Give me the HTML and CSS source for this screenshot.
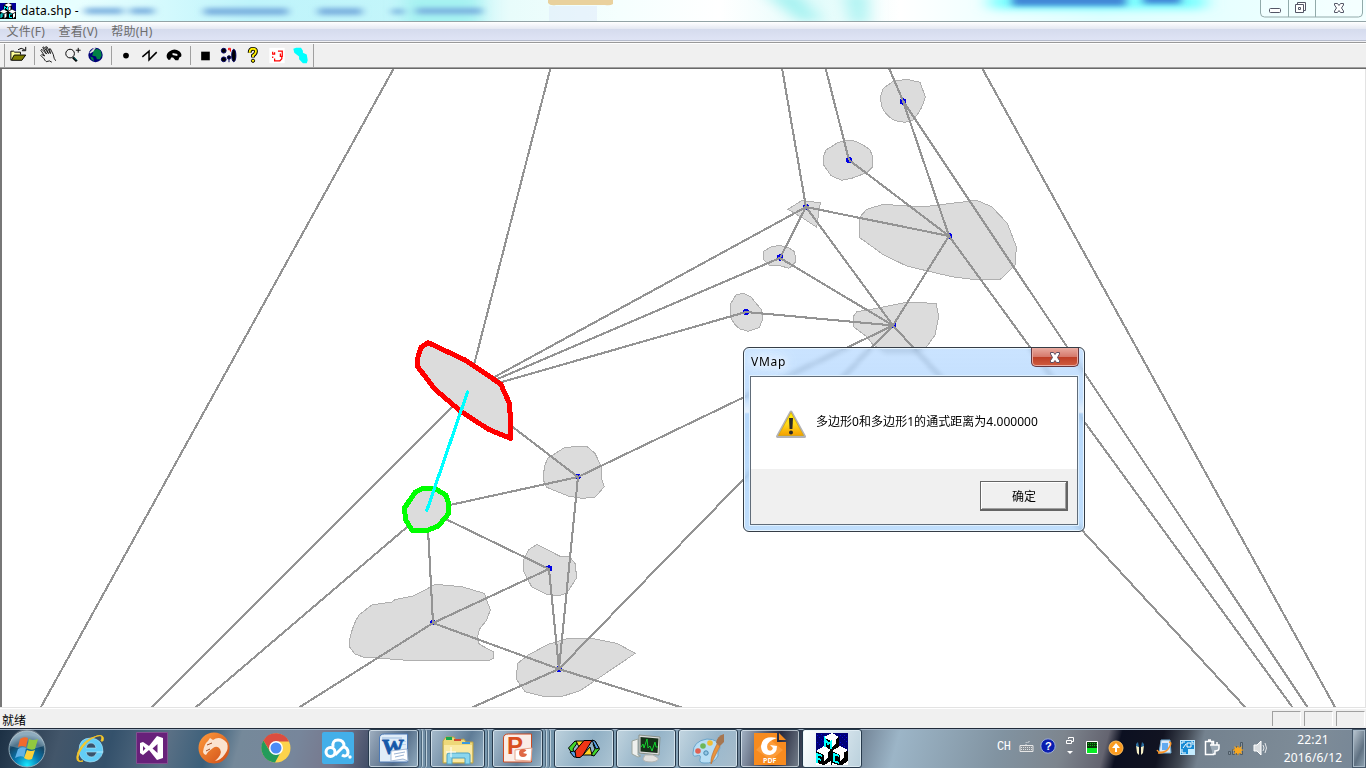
FILE: index.html
```html
<!DOCTYPE html>
<html lang="zh-CN">
<head>
<meta charset="utf-8">
<title>data.shp</title>
<link rel="stylesheet" href="styles.css">
</head>
<body>
<div class="window">
  <header class="titlebar">
    <svg class="app-icon" width="16" height="16" viewBox="0 0 32 32"><path fill="#000" d="M0 0h32v32H0z"/><path fill="#000096" d="M0 0h12L7 5v8L0 16zM21 0h11v16l-8-4V5z"/><path fill="#fff" d="M9 4l8-4 7 4-7 4zM0 17l7-4 8 4-7 4zM17 17l7-4 8 4-7 4zM17 9l4-2v6l-4 3zM9 22l4-2v7l-4 4zM26 22l4-2v7l-4 4z"/><path fill="none" stroke="#0ff" stroke-width="2" d="M9 13V7l6 6V7M2 30v-8h5M2 26h4M24 22h-5v7h5"/></svg>
    <span class="title">data.shp -</span>
    <svg class="glass-blur" width="1366" height="21" viewBox="0 0 1366 21">
      <defs><filter id="soft" x="-10%" y="-150%" width="120%" height="400%"><feGaussianBlur stdDeviation="4 2.5"/></filter><filter id="haze" x="-10%" y="-100%" width="120%" height="300%"><feGaussianBlur stdDeviation="9 4"/></filter></defs>
      <g filter="url(#haze)"><path fill="#a5f2f1" d="M405-6h75v32h-75zM765-6h35l20 27h-20zM845-6h22v30h-15z"/><path fill="#7ff" d="M990-6h215v15h-215z"/></g>
      <g filter="url(#soft)"><path fill="#3f86d6" d="M1012-8h114v14h-114zM1143-8h38v12h-38z"/><path fill="#78aede" d="M85 8h38v6H85zM130 8h24v6h-24zM204 8h84v7h-84zM318 8h44v7h-44zM392 9h12v5h-12zM416 8h66v6h-66z"/></g>
      <path fill="#e8c98c" opacity=".85" d="M548 0h65v4q-3 2-8 1h-49q-6 1-8-2z"/><path fill="#dae4fb" opacity=".4" d="M549 6h48v15h-48z"/>
    </svg>
    <div class="controls">
      <svg width="103" height="18" viewBox="0 0 103 18"><path d="M.5 0v13q0 4 4 4h94q4 0 4-4V0M28.500 0v17M55.500 0v17" fill="none" stroke="#91aaaa"/><g fill="#fff" stroke="#535666"><rect x="9.500" y="8.500" width="11" height="4" rx="1"/><path d="M37.500 2.500h8v8h-8z"/><path d="M35.500 4.500h8v8h-8z"/><path d="M38.500 7.500h2v2h-2z"/><path d="M74.500 3.500h3l1.500 2 1.500-2h3v1.500L81.500 8l2 3v1.500h-3l-1.500-2-1.500 2h-3V11l2-3-2-3z"/></g></svg>
    </div>
  </header>
  <nav class="menubar"><span>文件(F)</span><span>查看(V)</span><span>帮助(H)</span></nav>
  <div class="toolbar">
    <i class="grip"></i>
    <svg viewBox="0 0 24 24"><path d="M3.500 17V7.500h3l1 1h6V11" fill="#ff9" stroke="#000"/><path d="M4 17l3-5.500h12L15 17z" fill="#808000" stroke="#000"/><path d="M11 6q3-3 7 0M19 3v4h-4" fill="none" stroke="#000"/></svg>
    <i class="sep"></i>
    <svg viewBox="0 0 24 24"><path d="M9.500 18l-2-3-3-3 1-1 3 1.500-4-6 1-1 5 5-4-7 1-.5 5 7-3-7h1.500l3.500 7-1-5h1l3 6 1 4 1.500 2.500M10 18.500q4-2 6 .5" fill="none" stroke="#000" stroke-width=".9"/></svg>
    <svg viewBox="0 0 24 24"><circle cx="10" cy="10" r="4.500" fill="none" stroke="#000"/><path d="M13 14l4 4" stroke="#000" stroke-width="2.500"/><path d="M14 14l3 3" stroke="#0a9090"/><path d="M16 6.500h5M18.500 4v5" stroke="#000"/></svg>
    <svg viewBox="0 0 24 24"><circle cx="11.500" cy="11.500" r="7.500" fill="#000078"/><path d="M9 7l4-2 4 2 1 5-2 4h-3l-1-3-4-1 1-3zM6 13l3 1 1 4-3-2z" fill="#008244"/><path d="M5 9l5-5h2l-3 4-3 2z" fill="#ddd"/></svg>
    <i class="sep second"></i>
    <svg viewBox="0 0 24 24"><circle cx="12" cy="12" r="3"/></svg>
    <svg viewBox="0 0 24 24"><path d="M4 13.500l7-6v9l8-8" fill="none" stroke="#000" stroke-width="1.600"/></svg>
    <svg viewBox="0 0 24 24"><path fill-rule="evenodd" d="M4.500 14q-1-4 3-6.500 5-3.500 10 0 3 2.500 2 5.500l-2 1-1 3h-3l-2.500-3H9l-1 2.500H6zM10.500 9.500v2l5 1v-2z"/></svg>
    <i class="sep third"></i>
    <svg viewBox="0 0 24 24"><path d="M8 8h9v9H8z"/></svg>
    <svg viewBox="0 0 24 24"><g fill="#000" stroke="#000060"><circle cx="6.500" cy="7" r="2.500"/><circle cx="6.500" cy="16" r="2.500"/><circle cx="12" cy="14" r="1.800"/><path d="M12 15v4"/><ellipse cx="17" cy="12" rx="2.200" ry="6.500"/></g><path d="M13.500 8V4.500h-2V6h2" fill="none" stroke="red"/></svg>
    <svg viewBox="0 0 24 24"><path d="M8.500 9q0-4 3.500-4t3 3q0 2-3 4v2" fill="none" stroke="#000" stroke-width="4"/><path d="M8.500 9q0-4 3.500-4t3 3q0 2-3 4v1.500" fill="none" stroke="#ffef00" stroke-width="2"/><circle cx="12" cy="17.500" r="1.700" fill="#ffef00" stroke="#000"/></svg>
    <svg viewBox="0 0 24 24"><path fill="#fff" d="M4 4h16v16H4z"/><path d="M7.500 8v2.500h2V8.500M13 7.500h4.500V13h-2v-3M7.500 13v1.500M9.500 15v2.500h5.500l2-2v-2" fill="none" stroke="red" stroke-width="1.300"/></svg>
    <svg viewBox="0 0 24 24"><path d="M4 5l3-1h5l2 3v2l4 2 1 6-1 3h-4l-4-4v-3l-5-4z" fill="#0ff"/></svg>
    <i class="sep last"></i>
  </div>
  <main class="map">
    <svg width="1364" height="638" viewBox="2 69 1364 638" shape-rendering="crispEdges">
      <g fill="#dcdcdc" stroke="#afafaf">
        <path d="M893.3 81.300L906.700 79.300 920 82.300 925.300 96.700Q923 108 913.300 120L905 122.300 895 120.700Q886 116 881.700 106.700L880.300 96.700 883.300 88.300z"/>
        <path d="M826 150L838.300 142.300Q846 140 853.300 140.700 863 144 870 150L872.700 156.700V166.700L866.700 172.700 851.700 178.300 841.700 180.300 831 175.700 823.700 165V156z"/>
        <path d="M787.7 209.300L801.700 200.700 820.300 202.700 816.700 227.300 803.300 218.300z"/>
        <path d="M859.3 217.700L866.700 209.300 883.300 204.300 921.700 207 976.700 200.300 991.700 206.700 1007.300 223.300 1016.300 246.700 1015.300 265 1000.700 279 978.300 280 951.700 276.700 906.700 266 883.300 254.700 859.300 237.300z"/>
        <path d="M763.3 251.700L770 247.300 779.300 245.300 787.700 247.300 794.700 251.700 795.700 261.700 789 268.300 780 265.700 770 266 763.300 259.300z"/>
        <path d="M743.3 293.300L750.700 296.700 761.700 310 762.300 320 759.300 327.700 748.300 331.300 740 329Q733 324 730.700 316.700L731 303.300 736 295z"/>
        <path d="M856.7 311.700L873.300 309 906.700 302.300 936 303.300 938.700 316.700 935 335 926.700 346.700 915 352H885L873.300 345 866.700 336.700 853.300 326.700V316.700z"/>
        <path d="M547.7 458.300L565 447.300 586.700 446.300 595 453.300 601 466 602 480 604.300 486.700 595 497.300 581.700 498.300 568.300 496 546.700 487.300 543.300 480 544.300 466.700z"/>
        <path d="M537 544.300L560 556.300H569.300L575.700 564.300 576.300 578.300 566.700 593.300 558.300 595.700 546.700 594.300 531.700 586.700 523.700 571.700V560L528.300 550z"/>
        <path d="M435 584.300L461.700 586.700 484.300 593.300 490.300 610 486.700 620 479.300 629.300 477.300 638.300 479.300 644.300 493.300 651.700V658.300L489 660.300H406.700L363.300 657 355 654 349.300 646.700 350 638.300Q353 624 359 615L371.700 605 391.700 602 395 599.700 413.300 596 423.300 591z"/>
        <path d="M516.7 673.300L517.700 663.300 528.300 655 548.300 644.300 568.300 638.300H591.700L616.700 643.300 635.300 653.300 580 690.700 563.300 696H541.700L525 691.700 517 680z"/>
      </g>
      <g fill="#0000e6">
        <circle cx="903" cy="101.500" r="3.200"/><circle cx="849" cy="160" r="3.200"/><circle cx="806" cy="207" r="3.200"/><circle cx="949.500" cy="236" r="3"/><circle cx="780" cy="257.500" r="3.200"/><circle cx="746" cy="312" r="3.200"/><circle cx="893.500" cy="325.500" r="3"/><circle cx="578" cy="476.500" r="3"/><circle cx="549" cy="568.500" r="3.200"/><circle cx="433" cy="622.500" r="3"/><circle cx="559" cy="669" r="3"/>
      </g>
      <path fill="none" stroke="#949494" stroke-width="2.100" d="M394 68L41 707M550.500 68L467 392M782 68L806 207M825.500 68L849 160M889 68L903 101L949 236L849 160M903 101L1308 708M982 68L1335.500 708M949 236L1293 708M949 236L806 207L893 325.500L1246 708M806 207L780 258L893 325.500L746 312L467 392L780 258M467 392L806 207M949 236L893 325.500L578 477L467 392L151 708M893 325.500L559 669M427 510L578 477L559 669L549 569L427 510L195 708M427 510L433 623L549 569M433 623L559 669L682 707.500M433 623L299 707.500M559 669L472 707.500"/>
      <path fill="#dcdcdc" stroke="red" stroke-width="5" stroke-linejoin="round" d="M428.3 342.700L465 360 500.700 384 509.700 404 511 438.500 488.300 429.300 460 410.700 435 389.300 417.700 366.700V358L421 347.300z"/>
      <path fill="#dcdcdc" stroke="#0f0" stroke-width="5" stroke-linejoin="round" d="M422.3 488.500H435L446 495.300 449 504 448.300 514 438.300 526 426.700 530.700H412.300L405.700 520 404.300 508.300 415 492.300z"/>
      <path d="M467.500 392L427 510" stroke="#0ff" stroke-width="3.200" stroke-linecap="round"/>
    </svg>
  </main>
  <footer class="status"><span class="ready">就绪</span><i></i><i></i><i></i></footer>
</div>

<section class="dialog">
  <div class="dialog-head"><span>VMap</span>
    <div class="close"><svg width="12" height="11" viewBox="0 0 12 11"><path d="M1.500.500h3L6 2.500 7.500.500h3V2L8.500 5.500l2 3V10.500h-3L6 8.500l-1.500 2h-3V8.500l2-3L1.500 2z" fill="#fff" stroke="#5e4c60"/></svg></div>
  </div>
  <div class="dialog-body">
    <div class="message">
      <svg width="32" height="30" viewBox="0 0 32 30"><defs><linearGradient id="warn" x2="0" y2="1"><stop stop-color="#fff200"/><stop offset=".5" stop-color="#ffd91c"/><stop offset="1" stop-color="#f5a000"/></linearGradient></defs><path d="M16 3L2.500 27.500h27z" fill="#bbb" stroke="#b3b3b7" stroke-width="3" stroke-linejoin="round"/><path d="M16 3.500L3.500 26.500h25z" fill="url(#warn)" stroke="#d8a500" stroke-width=".7"/><path d="M14 9h4l-.6 11h-2.800z" fill="#292929"/><circle cx="16" cy="23.500" r="2" fill="#292929"/></svg>
      <span>多边形0和多边形1的通式距离为4.000000</span>
    </div>
    <div class="actions"><button>确定</button></div>
  </div>
</section>

<div class="taskbar">
  <div class="start"><svg width="40" height="40" viewBox="0 0 40 40"><defs><radialGradient id="orb" cx=".5" cy=".95" r=".85"><stop stop-color="#18e9ff"/><stop offset=".4" stop-color="#087ab2"/><stop offset=".75" stop-color="#154564"/><stop offset="1" stop-color="#6a91a9"/></radialGradient></defs><circle cx="20" cy="20" r="18" fill="url(#orb)" stroke="#94acb9"/><path d="M3 17a17 17 0 0 1 34 0q-17 6-34 0z" fill="#fff" opacity=".25"/><path d="M13 10q4-3 8-1l-2 9q-4-2-8 0z" fill="#f06a2d"/><path d="M22 10q4 2 9 0l-3 10q-4 2-8-1z" fill="#91c83e"/><path d="M11 20q4-3 8-1l-2 9q-4-2-9 1z" fill="#5fb2e7"/><path d="M20 21q4 2 8 0l-3 9q-4 2-8-1z" fill="#fbd13b"/></svg></div>
  <div class="pin"><svg viewBox="0 0 32 32"><path d="M23 20h6q-3 10-13 10-11-1-11-12Q5 6 17 6q12 1 12 14H12q1 5 6 5 3 0 5-5zm-11-4h10q-1-5-5-5t-5 5z" fill="#62cdf6" fill-rule="evenodd" stroke="#b4eafc" stroke-width=".6"/><path d="M29 9q2-7-6-5Q10 7 4 20q-4 12 5 9-7 2-4-8Q12 8 23 4q7-2 4 5z" fill="#fbd22d" stroke="#efc02a"/></svg></div>
  <div class="pin"><svg viewBox="0 0 32 32"><path fill="#68217a" stroke="#825091" d="M.5.500h31v31H.5z"/><path fill="#fff" fill-rule="evenodd" d="M4 11l3-1 6 4 8-10 6 2v20l-6 2-8-10-6 5-3-2zm3 3v5l2.500-2.500zm9.500 2.500l5 4.500v-9z"/></svg></div>
  <div class="pin"><svg viewBox="0 0 32 32"><defs><linearGradient id="cat" x2="1" y2="1"><stop stop-color="#ff9b3c"/><stop offset="1" stop-color="#ce4c17"/></linearGradient></defs><circle cx="16" cy="16" r="15.500" fill="url(#cat)"/><path d="M5 20q1-8 5-11l2-3 3 2q7-5 14 3 2 6-2 11-4 6-10 7 8-7 5-12-3-4-7-1l-5 4-2 3-2-1z" fill="#fbe3d0"/><path d="M9 13l5-2M8 19l4-2" stroke="#a4491d" fill="none"/></svg></div>
  <div class="pin"><svg viewBox="0 0 32 32"><circle cx="16" cy="16" r="14.500" fill="#fdd34b"/><path d="M3.400 8.500A14.500 14.500 0 0 1 29 9.500H16L10 19z" fill="#db4d40"/><path d="M3.400 8.500A14.500 14.500 0 0 0 15 30.500l6-11H10z" fill="#239b5a"/><circle cx="16" cy="16" r="7" fill="#fff"/><circle cx="16" cy="16" r="5.500" fill="#4c8bf5"/></svg></div>
  <div class="pin"><svg viewBox="0 0 32 32"><rect width="32" height="32" rx="2" fill="#43afe9"/><g fill="none" stroke="#fff" stroke-width="3"><circle cx="8.500" cy="20" r="4.500"/><path d="M11 15q-1-7 5-7t6 6l-9 9M21 15q5 0 5 6l-1 3M20 23q3 2 5 0"/></g><circle cx="28" cy="25" r="1.700" fill="#fff"/></svg></div>

  <div class="task stack"><div class="face"><svg viewBox="0 0 32 32"><path d="M1.500 5q0-4 5-4h23v28h-28z" fill="#e1edf8" stroke="#4c79b5"/><path d="M4 4h20v2H4zM24 8h4v1h-4zM24 11h4v1h-4z" fill="#bed4ec"/><text x="4" y="21" class="word">W</text><path d="M13 18l16-2 1 12-5-2-12 2z" fill="#fff" stroke="#a3b9d5"/><path d="M16 21l11-2M17 24l9-2" stroke="#9cb4d3"/></svg></div><b></b><b></b></div>
  <div class="task stack wide"><div class="face"><svg viewBox="0 0 32 32"><path d="M1 8l3-4h8l2 3 8-1 2 3h7v21H1z" fill="#eed879" stroke="#b9a044"/><path d="M4 4h6v3H4z" fill="#18a94c"/><path d="M12 6h7v2h-7z" fill="#cf4a32"/><path d="M20 9h8v2h-8z" fill="#3899df"/><path d="M2 12h28v17H2z" fill="#fae9a2"/><path d="M5 31V22q0-2 2-2h19q2 0 2 2v9h-5v-6H10v6z" fill="#8bd6ee" stroke="#4fa0c1"/><path d="M9 14v10M4 19h10" stroke="#fff"/></svg></div><b></b></div>
  <div class="task stack"><div class="face"><svg viewBox="0 0 32 32"><path d="M1.500 5q0-4 5-4h23v28h-28z" fill="#faede7" stroke="#cc4b22"/><text x="5" y="21" class="ppt">P</text><path d="M13 17l17-2-1 13-16-1z" fill="#fff" stroke="#e8a68e"/><circle cx="21" cy="20" r="4" fill="#df6947"/><path d="M21 20l4-3v4z" fill="#fff"/></svg></div><b></b><b></b></div>
  <div class="task"><svg viewBox="0 0 32 32"><g stroke="#000" stroke-linejoin="round"><path d="M.5 15L7 8l3 1-5 7 3 7-3-1z" fill="#43d629"/><path d="M8 8h8l-5 6z" fill="#ffd426"/><path d="M2 19l4-1 5 6H6z" fill="#579ee7"/><path d="M31.500 16L26 23l-3-1 4-6-2-5 2-3z" fill="#43d629"/><path d="M24 7l3 1 4 7-3 1z" fill="#579ee7"/><path d="M15 22l7-8 2 8z" fill="#ffd426"/><path d="M7 18L16 7.500h8L15 22l-3 2.500H8z" fill="#f13516"/></g></svg></div>
  <div class="task"><svg viewBox="0 0 32 32"><path d="M2 8l6-2v16l3 1-3 1-6-3z" fill="#eef0ee" stroke="#9ba59e"/><path d="M9 2l21 2-1 18-20-2z" fill="#ddd" stroke="#88918a"/><path d="M10.500 4l18 1.500-1 14.500-17-1.500z" fill="#17301a"/><path d="M11 14l2-3 1 4 3-9 1 9 2-2 2 5 3-9 1 5h2" fill="none" stroke="#13d22d"/><path d="M15 22h8l5 3q1 3-6 4-9 0-9-3z" fill="#e0e0de" stroke="#b4b4b0"/></svg></div>
  <div class="task"><svg viewBox="0 0 32 32"><path d="M1 20Q1 8 15 6q12 0 13 9-3 4-2 8-4 8-14 7-5 0-4-4 2-5-4-3-3 1-3-3z" fill="#b8def4" stroke="#6ba5ca"/><circle cx="6" cy="18" r="2.800" fill="#e06152"/><circle cx="11" cy="13" r="2.800" fill="#6eb758"/><circle cx="18" cy="10" r="2.800" fill="#f0bc36"/><circle cx="14" cy="20" r="2.200" fill="#92c7e6" stroke="#4786ad"/><path d="M25 11l3 2-6 12-3 6q-1-7 6-20z" fill="#ea943c" stroke="#b6642c" stroke-width=".6"/><path d="M24 10q1-7 8-9l1 7-5 5z" fill="#a67650"/></svg></div>
  <div class="task dark"><svg viewBox="0 0 32 32"><path fill="#f78b1f" d="M0 0h23v9h9v23H0z"/><path d="M25 0l7 7h-7z" fill="#f78b1f"/><path d="M2 17L14 5l15 12-12 10z" fill="#ffa94d" opacity=".6"/><path d="M23 5Q8 2 7 13q0 9 9 9 7-1 7-9l-7-1 3 3q-1 4-5 2-4-8 9-12z" fill="#fff"/><text x="9" y="30" class="pdf">PDF</text></svg></div>
  <div class="task current"><svg viewBox="0 0 32 32" shape-rendering="crispEdges"><path fill="#000078" d="M0 0h32v18H0z"/><path d="M1 2l8 8M5 1l4 4M1 9l4 4M24 2l7 7M28 2l3 3M24 9l5 5" stroke="#0707d8" stroke-dasharray="1 2"/><path fill="#000" d="M8 4l8 4 7-4v12l9 2v14H0V18l8-3z"/><path fill="#fff" d="M8 4l8-4 7 4-7 5zM0 18l8-5 7 4-7 5zM16 18l8-5 8 4-8 5zM16 9l4-3v4l-4 5zM8 22l4-3v5l-4 5zM24 22l4-3v5l-4 5z"/><path fill="#fff" d="M0 29l7 3H0zM8 32l7-4v4zM16 30l6 2h-6zM26 32l6-4v4z"/><path fill="none" stroke="#0ff" stroke-width="2" d="M9 14V6l3 5 3-2v7M1 30v-9l5 2M1 25l4 2M23 23l-5-2v7l5 2"/></svg></div>

  <div class="tray">
    <span class="lang">CH</span>
    <svg class="keyboard" viewBox="0 0 16 16"><path d="M1 6.500h13v6H1z" fill="#8b9298" stroke="#e6e6e6"/><path d="M7 6V3.500h3V2M2 8.500h11M2 10.500h11" stroke="#dde1e4" stroke-dasharray="1 1" fill="none"/></svg>
    <svg class="help" viewBox="0 0 16 16"><circle cx="8" cy="8" r="7.200" fill="#0a1db0" stroke="#9eafd4"/><text x="5" y="12" class="q">?</text></svg>
    <svg class="restore" viewBox="0 0 10 20"><path d="M1.500 4.500h5v3h-5zM3.500 3V1.500h5v4H7" fill="none" stroke="#fff"/><path d="M2 15h6l-3 3z" fill="#fff"/></svg>
    <svg viewBox="0 0 24 24"><path d="M6.500 5.500h11v12h-11z" fill="#063a08" stroke="#fff"/><path d="M7 12h10v5H7z" fill="#08ed25"/><path d="M8 7.500h9M8 9.500h9" stroke="#10b018" stroke-dasharray="1 1"/></svg>
    <svg viewBox="0 0 24 24"><circle cx="12" cy="12" r="7" fill="#fb9b20" stroke="#ffbd5c"/><path d="M12 7l4 5h-3v4h-2v-4H8z" fill="#fff"/></svg>
    <svg viewBox="0 0 24 24"><path d="M8 9l3 2v8l-2-2zM16 9l-3 2v8l2-2z" fill="#f6f0c8"/><path d="M8 8l2-2 1 5-3-1zM16 8l-2-2-1 5 3-1z" fill="#2a6c9e"/></svg>
    <svg viewBox="0 0 24 24"><path d="M9 4h9l1 13H7z" fill="#dce9f7" stroke="#6baad4"/><path d="M10 7h6v7h-6z" fill="#61aaf0"/><path d="M6 17q8 1 12-7 2-4-1-4M5 14q2 4 9 1" fill="none" stroke="#fb962a" stroke-width="1.500"/></svg>
    <svg viewBox="0 0 24 24"><rect x="4.500" y="4.500" width="14" height="14" fill="#168bd5" stroke="#c3ebff"/><path d="M6 8V6h3M15 6h2v3M7 12l3-4M11 7h4v4h-4zM6 13v4h4" stroke="#fff" fill="none"/><path d="M12 13h6v5h-6z" fill="#c6edff"/></svg>
    <svg viewBox="0 0 24 24"><path d="M5.500 5.500h8v13h-8zM8 4h3" fill="none" stroke="#fff" stroke-width="1.500"/><path d="M12 9V6M17 9V6M10 9h9v3q0 3-4 3v3h-2" stroke="#fff" fill="#9dabb7" stroke-width="1.500"/></svg>
    <svg viewBox="0 0 24 24"><path d="M4.500 15.500h2v3h-2zM8.500 13.500h2v5h-2zM12.500 10.500h2v8h-2zM16.500 6.500h2v12h-2z" fill="#8795a1" stroke="#4d5a65"/><path d="M14 9l1 3 3-2-1 3 3 1-3 1 1 3-3-1-1 3-1-3-3 1 1-3-3-1 3-1-1-3 3 2z" fill="#f9a71e"/></svg>
    <svg viewBox="0 0 24 24"><path d="M6 9h3l4-4v14l-4-4H6z" fill="#d9dde0" stroke="#fff"/><path d="M15 9q2 3 0 6M17 7q3 5 0 10" fill="none" stroke="#fff" opacity=".8"/></svg>
  </div>
  <div class="clock"><span>22:21</span><span>2016/6/12</span></div>
  <div class="desktop"></div>
</div>
</body>
</html>
```
FILE: styles.css
```css
* { box-sizing: border-box; }
body { margin: 0; width: 1366px; height: 768px; overflow: hidden; display: flex; flex-direction: column; position: relative; background: #f0f0f0; font: 12px "Noto Sans", "Noto Sans CJK SC", sans-serif; color: #000; }
svg { display: block; flex: none; }
.window { height: 728px; display: flex; flex-direction: column; }
.titlebar { height: 22px; flex: none; display: flex; align-items: center; padding: 0 1px 0 0; border-bottom: 1px solid #93a3a6; background: linear-gradient(90deg, #dff 0, #e8ffff 80px, #bff4fb 250px, #c5f6fa 460px, #e8fcfb 510px, #f5fffe 620px, #fff 720px, #e4fcfb 820px, #fff 900px, #eff 1000px, #dff 1100px, #f3ffff 1366px); position: relative; }
.app-icon { margin-top: 1px; z-index: 1; }
.title { margin-left: 5px; font-size: 12px; letter-spacing: .2px; z-index: 1; line-height: 20px; text-shadow: 0 0 6px #fff; }
.glass-blur { position: absolute; inset: 0; overflow: hidden; }
.controls { margin-left: auto; align-self: flex-start; z-index: 1; background: rgba(245,255,255,.5); border-radius: 0 0 4px 4px; margin-right: 2px; }
.menubar { height: 22px; flex: none; display: flex; gap: 13.500px; padding-left: 6.500px; line-height: 20px; letter-spacing: .2px; color: #6d6d6d; background: linear-gradient(#fff, #e8ebf4 6px, #e4e8f2 7px, #d5dbed 7px, #dfe4f5 18px, #b6bccc 18px, #b6bccc 19px, #f2f2f5 19px, #f2f2f5 20px, #999 20px, #999 21px, #fff 21px); }
.toolbar { height: 25px; flex: none; display: flex; background: #f0f0f0; border-bottom: 1px solid #696969; box-shadow: inset 0 -1px #a0a0a0; }
.toolbar svg { width: 24px; height: 23px; }
.grip { width: 1px; margin: 0 2px 1px 4px; background: #a0a0a0; }
.sep { width: 1px; margin: 2px 1px 3px 3px; background: #a0a0a0; }
.sep.second { margin-right: 2px; }
.sep.third { margin-left: 4px; margin-right: 2px; }
.sep.last { margin: 0 0 1px 0; }
.map { height: 638px; flex: none; background: #fff; border-left: 2px solid #777; border-right: 1px solid #e3e3e3; overflow: hidden; }
.status { height: 21px; flex: none; display: flex; gap: 3px; border-top: 1px solid #e3e3e3; padding: 3px 1px 2px 0; box-shadow: inset 0 1px #fff; }
.ready { flex: 1; padding-left: 2px; line-height: 19px; }
.status i { width: 29px; border-left: 1px solid #a0a0a0; border-top: 1px solid #a0a0a0; border-right: 1px solid #fff; }
.dialog { position: absolute; left: 743px; top: 347px; width: 342px; height: 185px; border: 1px solid #353d46; border-radius: 6px; padding: 0 6px 6px; display: flex; flex-direction: column; background: linear-gradient(rgba(150,200,255,.5), rgba(145,196,252,.55) 50px, rgba(225,238,252,.8) 64px, rgba(145,196,249,.65) 66px, rgba(150,200,250,.6)); box-shadow: inset 0 0 0 1px #e9f6ff; backdrop-filter: blur(2.5px); }
.dialog-head { height: 28px; flex: none; display: flex; justify-content: space-between; padding-left: 1px; line-height: 28px; }
.dialog-head span { text-shadow: 0 0 6px #fff, 0 0 10px #fff, 0 0 14px #fff; letter-spacing: .7px; }
.close { width: 48px; height: 19px; display: flex; align-items: center; justify-content: center; margin-right: -1px; border: 1px solid #653740; border-top: 0; border-radius: 0 0 5px 5px; box-shadow: inset 0 0 0 1px #e9aaa0; background: linear-gradient(#e8aaa0, #d5786a 9px, #bd3d26 9px, #cf5c3f); }
.dialog-body { flex: 1; display: flex; flex-direction: column; border: 1px solid #606c79; background: #f0f0f0; box-shadow: 0 0 0 1px #dff0fe; }
.message { height: 92px; background: #fff; display: flex; padding: 32px 0 0 24px; gap: 9px; }
.message span { line-height: 26px; white-space: nowrap; letter-spacing: .04px; }
.actions { display: flex; justify-content: flex-end; padding: 12px 9px 0 0; }
button { width: 88px; height: 30px; padding: 0 0 0 1px; font: inherit; background: #f0f0f0; border: 1px solid #646464; border-right-width: 2px; border-bottom-width: 2px; box-shadow: inset 1px 1px #fff, inset -1px -1px #a0a0a0; }
.taskbar { height: 40px; flex: none; display: flex; border-top: 1px solid #202a3a; box-shadow: inset 0 1px #9fb1c4; background: linear-gradient(105deg, #1c3044 0, #43566a 60px, #34516b 110px, #5a7085 165px, #3b5f7a 205px, #75899a 235px, #77869b 290px, #77778c 330px, #424e68 365px, #6c8ca4 430px, #7797ac 560px, #8faabe 700px, #2f3548 770px, #9cb5c7 870px, #8193a1 970px, #7d858e 1030px, #646470 1072px, #0c1021 1085px, #111321 1125px, #414853 1148px, #74828f 1165px, #7e8c98 1270px, #718295 1366px); }
.start { width: 59px; flex: none; padding-left: 7px; }
.pin { width: 61.900px; flex: none; display: flex; justify-content: center; padding-top: 3px; }
.pin svg, .task svg { width: 32px; height: 32px; }
.task { width: 60px; height: 39px; margin-right: 2px; display: flex; flex: none; justify-content: center; padding-top: 3px; border: 1px solid #273a4c; border-radius: 3px; box-shadow: inset 0 0 0 1px rgba(234,244,251,.65); background: linear-gradient(115deg, rgba(214,230,238,.75), rgba(155,187,208,.65) 55%, rgba(198,218,229,.65)); }
.task.stack { border: 0; box-shadow: none; background: none; padding: 0; justify-content: flex-start; }
.face { width: 51px; border: 1px solid #273a4c; border-radius: 3px; box-shadow: inset 0 0 0 1px rgba(234,244,251,.65); padding: 3px 0 0 9px; background: linear-gradient(115deg, rgba(190,208,222,.75), rgba(85,112,140,.6) 60%, rgba(168,193,210,.7)); }
.wide .face { width: 55px; padding-left: 11px; }
.stack b { width: 4px; border-right: 1px solid #bdd0dc; background: rgba(130,161,182,.55); box-shadow: inset -1px 0 #4d687d; border-radius: 0 3px 3px 0; }
.task.dark { background: linear-gradient(105deg, #a5b5c7, #272a3f 60%, #747f8b); }
.task.current { background: linear-gradient(110deg, #fff, #dbe8ef 50%, #bad0dc); }
.word { font: bold 22px "Liberation Serif", serif; fill: #1557a8; stroke: #1557a8; stroke-width: .8; }
.ppt { font: bold 24px "Liberation Sans", sans-serif; fill: #d94e1f; }
.pdf { font: bold 7px "Open Sans", sans-serif; fill: #fff; }
.q { font: bold 11px "Liberation Sans", sans-serif; fill: #fff; }
.tray { display: flex; padding-top: 7px; margin-left: auto; }
.tray svg { width: 24px; height: 24px; }
.lang { color: #fff; font: 12px "Liberation Mono", monospace; line-height: 22px; width: 22px; letter-spacing: -.5px; }
.tray .keyboard { width: 16px; height: 16px; margin-top: 3px; }
.tray .help { width: 16px; height: 16px; margin: 2px 9px 0 5px; }
.tray .restore { width: 10px; height: 20px; margin-right: 5px; }
.clock { width: 80px; display: flex; flex-direction: column; align-items: center; color: #fff; line-height: 18px; letter-spacing: .15px; padding: 2px 0 0 2px; }
.desktop { width: 14px; border: 1px solid #46586a; box-shadow: inset 0 0 0 1px #a7b8c6; background: linear-gradient(115deg, #bdc9d3, #5f7182 60%, #91a5b3); }
```
